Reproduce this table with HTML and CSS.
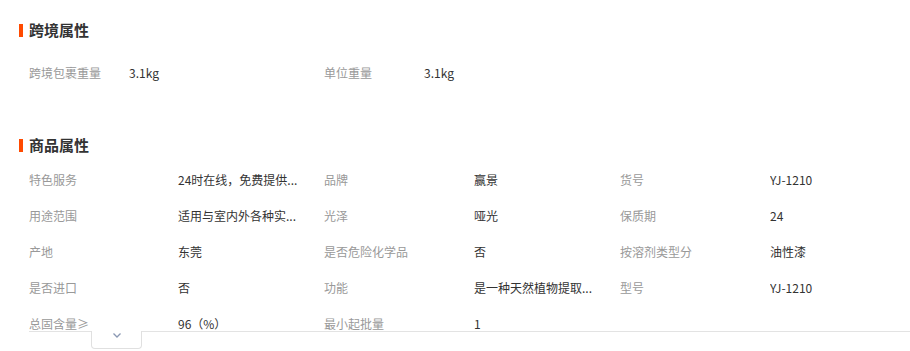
FILE: index.html
```html
<!DOCTYPE html>
<html lang="zh">
<head>
<meta charset="utf-8">
<title>属性</title>
<link rel="stylesheet" href="styles.css">
</head>
<body>
<div class="page">
  <h2 class="heading"><span class="bar"></span>跨境属性</h2>
  <div class="cross-grid">
    <span class="label">跨境包裹重量</span><span class="value">3.1kg</span>
    <span class="label">单位重量</span><span class="value">3.1kg</span>
  </div>

  <h2 class="heading heading-2"><span class="bar"></span>商品属性</h2>
  <div class="attr-wrap">
    <div class="attr-grid">
      <span class="label">特色服务</span><span class="value">24时在线，免费提供...</span>
      <span class="label">品牌</span><span class="value">赢景</span>
      <span class="label">货号</span><span class="value">YJ-1210</span>

      <span class="label">用途范围</span><span class="value">适用与室内外各种实...</span>
      <span class="label">光泽</span><span class="value">哑光</span>
      <span class="label">保质期</span><span class="value">24</span>

      <span class="label">产地</span><span class="value">东莞</span>
      <span class="label">是否危险化学品</span><span class="value">否</span>
      <span class="label">按溶剂类型分</span><span class="value">油性漆</span>

      <span class="label">是否进口</span><span class="value">否</span>
      <span class="label">功能</span><span class="value">是一种天然植物提取...</span>
      <span class="label">型号</span><span class="value">YJ-1210</span>

      <span class="label">总固含量≥</span><span class="value">96（%）</span>
      <span class="label">最小起批量</span><span class="value">1</span>
      <span class="label"></span><span class="value"></span>
    </div>
  </div>
  <div class="toggle">
    <svg class="chev" width="8" height="5" viewBox="0 0 8 5"><path d="M0.5 0.5 L4 4 L7.5 0.5" fill="none" stroke="#8a98b3" stroke-width="1.3"/></svg>
  </div>
</div>
</body>
</html>
```
FILE: styles.css
```css
html, body {
  margin: 0;
  padding: 0;
  background: #fff;
}
.page {
  padding: 22px 0 0 19px;
  font-family: "Noto Sans CJK SC", "Liberation Sans", sans-serif;
  font-size: 12px;
  color: #333;
}
.heading {
  margin: 0;
  display: flex;
  align-items: center;
  gap: 6px;
  height: 16px;
  line-height: 16px;
  font-size: 15px;
  font-weight: bold;
  color: #333;
}
.bar {
  display: block;
  width: 4px;
  height: 13px;
  background: #ff4a00;
}
.heading-2 {
  margin-top: 46px;
}
.cross-grid {
  margin: 17px 0 0 10px;
  display: grid;
  grid-template-columns: 100px 195px 100px 1fr;
  height: 36px;
  line-height: 36px;
}
.label {
  color: #999;
  white-space: nowrap;
  min-width: 0;
}
.value {
  color: #333;
  white-space: nowrap;
  overflow: hidden;
  text-overflow: ellipsis;
  max-width: 124px;
  min-width: 0;
}
.attr-wrap {
  margin: 9px 0 0 10px;
  height: 169px;
  overflow: hidden;
  border-bottom: 1px solid #e3e3e3;
}
.attr-grid {
  display: grid;
  grid-template-columns: 149px 146px 150px 146px 150px 1fr;
  grid-auto-rows: 36px;
  line-height: 36px;
}
.toggle {
  margin: -1px 0 0 72px;
  width: 49px;
  height: 16px;
  background: #fff;
  border: 1px solid #e0e0e0;
  border-top: none;
  border-radius: 0 0 4px 4px;
  display: flex;
  justify-content: center;
  padding-top: 1px;
  box-sizing: content-box;
}
.chev {
  display: block;
  margin-top: 1px;
}
```
